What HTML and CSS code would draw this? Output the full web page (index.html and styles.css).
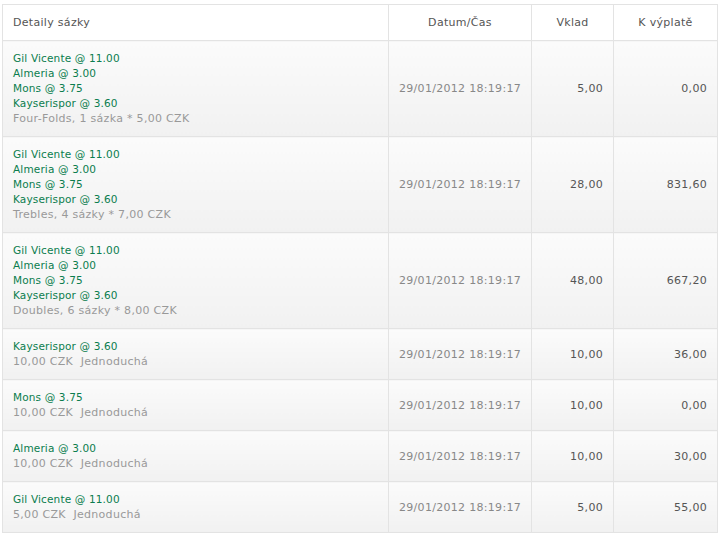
FILE: index.html
```html
<!DOCTYPE html>
<html lang="cs">
<head>
  <meta charset="UTF-8">
  <title>Historie sázek</title>
  <link rel="stylesheet" href="styles.css">
</head>
<body>
  <table class="bets">
    <thead>
      <tr>
        <th class="details">Detaily sázky</th>
        <th class="date">Datum/Čas</th>
        <th class="stake">Vklad</th>
        <th class="payout">K výplatě</th>
      </tr>
    </thead>
    <tbody>
      <tr>
        <td class="details">
          <div class="pick">Gil Vicente @ 11.00</div>
          <div class="pick">Almeria @ 3.00</div>
          <div class="pick">Mons @ 3.75</div>
          <div class="pick">Kayserispor @ 3.60</div>
          <div class="info">Four-Folds, 1 sázka * 5,00 CZK</div>
        </td>
        <td class="date">29/01/2012 18:19:17</td>
        <td class="num">5,00</td>
        <td class="num">0,00</td>
      </tr>
      <tr>
        <td class="details">
          <div class="pick">Gil Vicente @ 11.00</div>
          <div class="pick">Almeria @ 3.00</div>
          <div class="pick">Mons @ 3.75</div>
          <div class="pick">Kayserispor @ 3.60</div>
          <div class="info">Trebles, 4 sázky * 7,00 CZK</div>
        </td>
        <td class="date">29/01/2012 18:19:17</td>
        <td class="num">28,00</td>
        <td class="num">831,60</td>
      </tr>
      <tr>
        <td class="details">
          <div class="pick">Gil Vicente @ 11.00</div>
          <div class="pick">Almeria @ 3.00</div>
          <div class="pick">Mons @ 3.75</div>
          <div class="pick">Kayserispor @ 3.60</div>
          <div class="info">Doubles, 6 sázky * 8,00 CZK</div>
        </td>
        <td class="date">29/01/2012 18:19:17</td>
        <td class="num">48,00</td>
        <td class="num">667,20</td>
      </tr>
      <tr>
        <td class="details">
          <div class="pick">Kayserispor @ 3.60</div>
          <div class="info">10,00 CZK&nbsp; Jednoduchá</div>
        </td>
        <td class="date">29/01/2012 18:19:17</td>
        <td class="num">10,00</td>
        <td class="num">36,00</td>
      </tr>
      <tr>
        <td class="details">
          <div class="pick">Mons @ 3.75</div>
          <div class="info">10,00 CZK&nbsp; Jednoduchá</div>
        </td>
        <td class="date">29/01/2012 18:19:17</td>
        <td class="num">10,00</td>
        <td class="num">0,00</td>
      </tr>
      <tr>
        <td class="details">
          <div class="pick">Almeria @ 3.00</div>
          <div class="info">10,00 CZK&nbsp; Jednoduchá</div>
        </td>
        <td class="date">29/01/2012 18:19:17</td>
        <td class="num">10,00</td>
        <td class="num">30,00</td>
      </tr>
      <tr>
        <td class="details">
          <div class="pick">Gil Vicente @ 11.00</div>
          <div class="info">5,00 CZK&nbsp; Jednoduchá</div>
        </td>
        <td class="date">29/01/2012 18:19:17</td>
        <td class="num">5,00</td>
        <td class="num">55,00</td>
      </tr>
    </tbody>
  </table>
</body>
</html>
```

FILE: styles.css
```css
body {
  margin: 0;
  padding: 4px 0 0 2px;
  background: #fff;
  font-family: "DejaVu Sans", Verdana, sans-serif;
  font-size: 11px;
  letter-spacing: 0.3px;
  color: #444;
}
.bets {
  width: 716px;
  border-collapse: collapse;
  table-layout: fixed;
}
.bets th,
.bets td {
  border: 1px solid #e3e3e3;
  line-height: 15px;
}
.bets th {
  height: 35px;
  padding: 0 10px;
  font-weight: normal;
  color: #555;
  background: #fff;
  text-align: center;
}
.bets th.details {
  width: 365px;
  text-align: left;
}
.bets th.date {
  width: 122px;
}
.bets th.stake {
  width: 61px;
}
.bets td {
  padding: 10px;
  background: linear-gradient(#fbfbfb, #f1f1f1);
  vertical-align: middle;
}
.pick {
  color: #0b7d4e;
  font-size: 10.5px;
  letter-spacing: 0.15px;
}
.info {
  color: #999;
}
.bets td.date {
  color: #888;
  text-align: center;
}
.bets td.num {
  text-align: right;
  color: #555;
}
```
